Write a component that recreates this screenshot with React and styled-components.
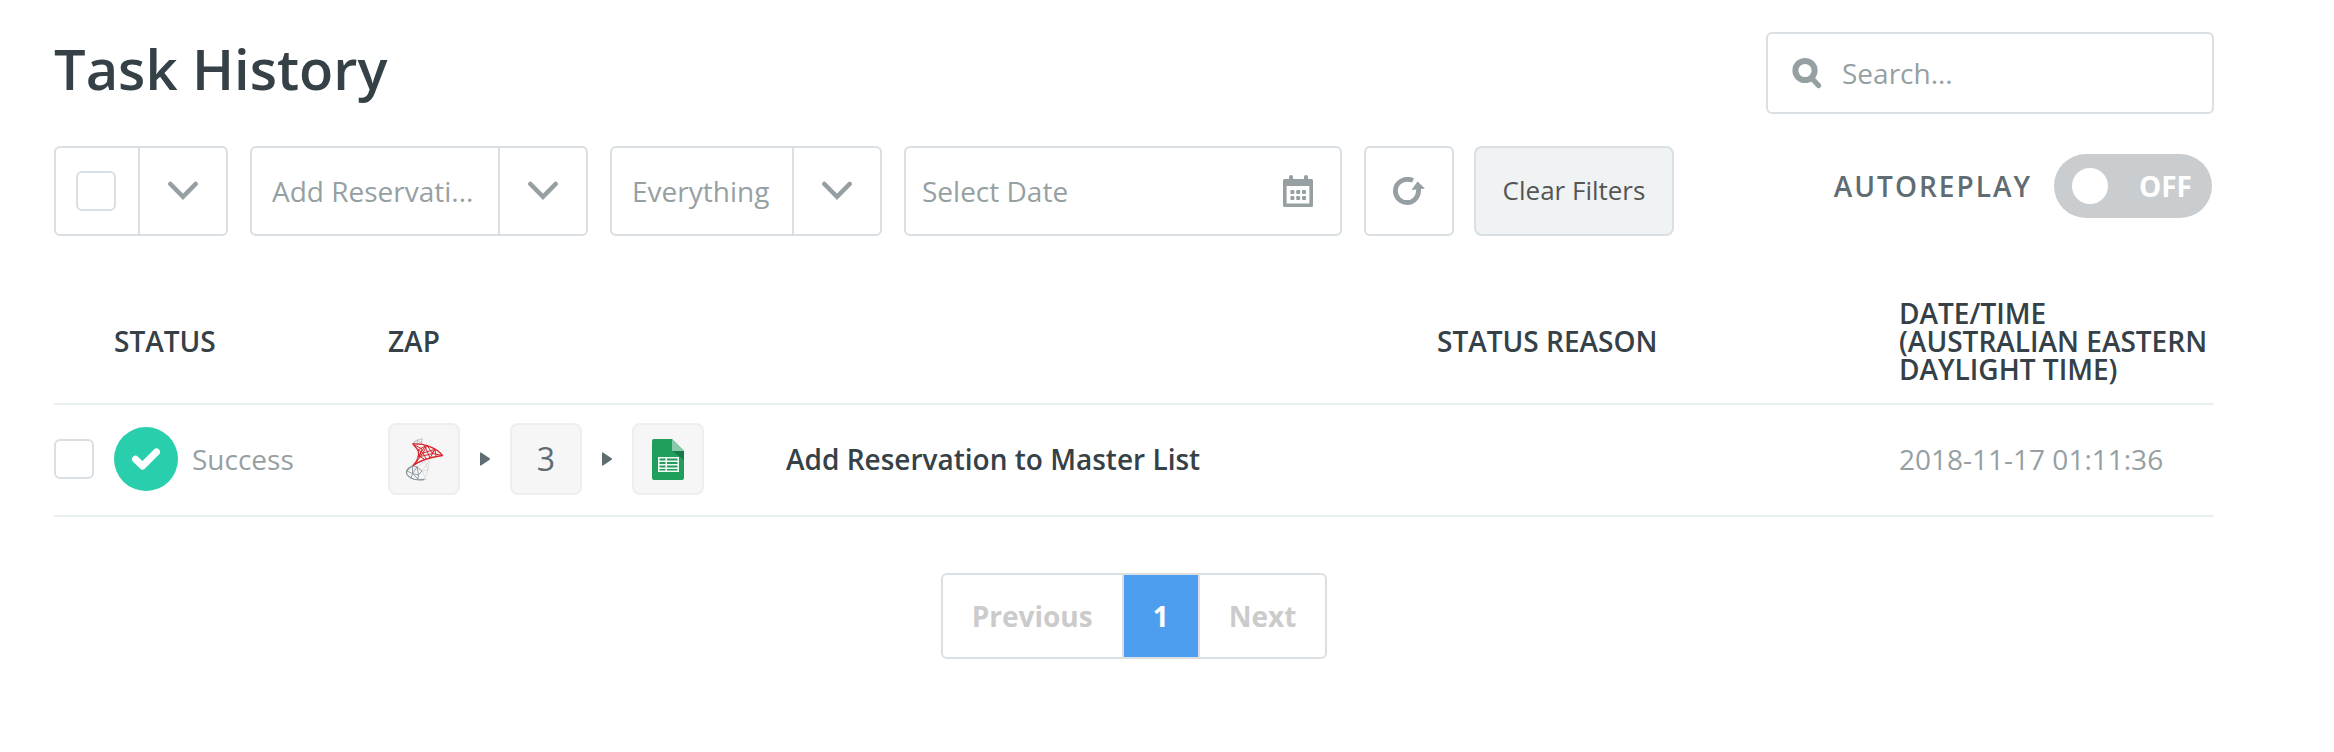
import React from "react";
import styled, { createGlobalStyle, css } from "styled-components";

const color = {
  ink: "#354147",
  slate: "#5f6c72",
  muted: "#969fa2",
  border: "#d9dfe2",
  rule: "#e9eeee",
  blue: "#4e9ef0",
  green: "#29cfad",
};

const GlobalStyle = createGlobalStyle`
  *, *::before, *::after { box-sizing: border-box; }
  body {
    margin: 0;
    background: #fff;
    color: ${color.ink};
    font: 400 28px/40px "Open Sans", "Noto Sans", sans-serif;
  }
  button, input, select { font: inherit; color: inherit; }
`;

const Page = styled.main`
  padding: 32px 120px 92px 54px;
`;

const TopBar = styled.header`
  display: flex;
  justify-content: space-between;
  align-items: flex-start;
`;

const Title = styled.h1`
  margin: 0;
  font-size: 56px;
  line-height: 72px;
  font-weight: 600;
`;

const frame = css`
  border: 2px solid ${color.border};
  border-radius: 6px;
  background: #fff;
`;

const SearchBox = styled.label`
  ${frame}
  display: flex;
  align-items: center;
  gap: 20px;
  width: 448px;
  height: 82px;
  padding: 0 24px;
`;

const TextInput = styled.input`
  flex: 1;
  min-width: 0;
  padding: 0;
  border: 0;
  outline: 0;
  background: none;
  color: ${color.muted};
  &::placeholder { color: ${color.muted}; opacity: 1; }
`;

const Toolbar = styled.div`
  display: flex;
  justify-content: space-between;
  align-items: flex-start;
  margin-top: 32px;
`;

const Filters = styled.div`
  display: flex;
  gap: 22px;
`;

const Actions = styled.div`
  display: flex;
  gap: 20px;
`;

const SplitBox = styled.div`
  ${frame}
  display: grid;
  grid-template-columns: 1fr 88px;
  grid-template-rows: 86px;
  width: ${(p) => p.$width}px;
`;

const CheckSlot = styled.span`
  display: flex;
  align-items: center;
  padding-left: 20px;
`;

const Checkbox = styled.input.attrs({ type: "checkbox" })`
  appearance: none;
  display: block;
  width: 40px;
  height: 40px;
  margin: 0;
  ${frame}
`;

const arrowCell = css`
  grid-column: 2;
  grid-row: 1;
  display: flex;
  align-items: center;
  justify-content: center;
  border: 0;
  border-left: 2px solid ${color.border};
`;

const ArrowButton = styled.button`
  ${arrowCell}
  padding: 0;
  background: none;
`;

const ArrowCell = styled.span`
  ${arrowCell}
  pointer-events: none;
`;

const Select = styled.select`
  grid-column: 1 / -1;
  grid-row: 1;
  appearance: none;
  padding: 0 88px 0 20px;
  border: 0;
  outline: 0;
  background: none;
  color: ${color.muted};
`;

const DateBox = styled.div`
  ${frame}
  display: flex;
  align-items: center;
  width: 438px;
  height: 90px;
  padding: 0 27px 0 16px;
`;

const IconButton = styled.button`
  display: flex;
  padding: 0;
  border: 0;
  background: none;
`;

const RefreshButton = styled.button`
  ${frame}
  display: flex;
  align-items: center;
  justify-content: center;
  width: 90px;
  height: 90px;
  padding: 0;
`;

const ClearButton = styled.button`
  width: 200px;
  height: 90px;
  padding: 0 0 2px;
  border: 2px solid ${color.border};
  border-radius: 8px;
  background: #eff3f4;
  color: #555;
  font-size: 26px;
`;

const Autoreplay = styled.label`
  display: flex;
  align-items: center;
  gap: 22px;
  padding: 8px 2px 0 0;
  color: ${color.slate};
  font-weight: 600;
  letter-spacing: 2px;
`;

const Toggle = styled.span`
  display: grid;
  width: 158px;
  height: 64px;
`;

const ToggleInput = styled.input.attrs({ type: "checkbox", role: "switch" })`
  grid-area: 1 / 1;
  appearance: none;
  display: flex;
  align-items: center;
  margin: 0;
  padding: 0 18px;
  border-radius: 32px;
  background: #cacdd0;
  &::before {
    content: "";
    width: 36px;
    height: 36px;
    border-radius: 50%;
    background: #fff;
  }
`;

const ToggleText = styled.span`
  grid-area: 1 / 1;
  align-self: center;
  justify-self: end;
  padding-right: 20px;
  color: #fff;
  font-weight: 700;
  letter-spacing: 0;
  pointer-events: none;
`;

const Table = styled.table`
  width: 100%;
  margin-top: 43px;
  border-collapse: collapse;
  table-layout: fixed;
`;

const Th = styled.th`
  width: ${(p) => (p.$width ? `${p.$width}px` : "auto")};
  padding: 20px 0;
  border-bottom: 2px solid ${color.rule};
  line-height: 28px;
  font-weight: 600;
  text-align: left;
`;

const Td = styled.td`
  height: 112px;
  padding: 0 0 2px;
  border-bottom: 2px solid ${color.rule};
  color: ${color.muted};
`;

const NameLink = styled.a`
  color: ${color.ink};
  font-weight: 600;
  text-decoration: none;
`;

const Status = styled.div`
  display: flex;
  align-items: center;
  gap: 14px;
`;

const Steps = styled.div`
  display: flex;
  align-items: center;
  gap: 20px;
`;

const Tile = styled.span`
  display: flex;
  align-items: center;
  justify-content: center;
  width: 72px;
  height: 72px;
  border: 2px solid #eee;
  border-radius: 8px;
  background: #f6f6f6;
  color: ${color.slate};
  font-size: 32px;
`;

const Pagination = styled.nav`
  display: flex;
  width: max-content;
  margin: 56px auto 0;
  ${frame}
  overflow: hidden;
`;

const PageButton = styled.button`
  height: 82px;
  padding: 0 29px;
  border: 0;
  background: ${(p) => (p.$current ? color.blue : "#fff")};
  color: ${(p) => (p.$current ? "#fff" : "#cbcbcb")};
  font-weight: 700;
  & + & { border-left: 2px solid ${color.border}; }
`;

const SearchIcon = () => (
  <svg width="30" height="32" viewBox="0 0 30 32" fill="none" stroke={color.muted} aria-hidden="true">
    <circle cx="13" cy="13.5" r="9.6" strokeWidth="6" />
    <path d="M20 21.5l6.5 7" strokeWidth="5.4" strokeLinecap="round" />
  </svg>
);

const Chevron = () => (
  <svg width="30" height="20" viewBox="0 0 30 20" fill="none" stroke={color.muted} strokeWidth="4.6" strokeLinecap="round" aria-hidden="true">
    <path d="M2.4 3L15 15.8 27.6 3" />
  </svg>
);

const CalendarIcon = () => (
  <svg width="30" height="32" viewBox="0 0 30 32" fill={color.muted} aria-hidden="true">
    <rect x="6" y="0" width="4" height="8" rx="2" />
    <rect x="21" y="0" width="4" height="8" rx="2" />
    <path fillRule="evenodd" d="M1.500 4h27A1.500 1.500 0 0 1 30 5.500v25a1.500 1.500 0 0 1-1.500 1.500h-27A1.500 1.500 0 0 1 0 30.500v-25A1.500 1.500 0 0 1 1.500 4zM3.600 11v17.500h22.800V11z" />
    {[7.4, 13.2, 19].map((x) => (
      <React.Fragment key={x}>
        <rect x={x} y="15" width="4" height="4" rx="1" />
        <rect x={x} y="21" width="4" height="4" rx="1" />
      </React.Fragment>
    ))}
  </svg>
);

const RefreshIcon = () => (
  <svg width="32" height="28" viewBox="0 0 32 28" aria-hidden="true">
    <path d="M20 3.400C12 0 2.400 5 2.400 13.800c0 6.500 5 11.700 11.600 11.700S25.600 20.500 25.600 13V10" fill="none" stroke={color.muted} strokeWidth="4.800" />
    <path d="M24.500 4.500L32 11.500 18.500 13z" fill={color.muted} />
  </svg>
);

const CheckBadge = () => (
  <svg width="64" height="64" viewBox="0 0 64 64" aria-hidden="true">
    <circle cx="32" cy="32" r="32" fill={color.green} />
    <path d="M21.500 32.200l7 6.800 14-14" fill="none" stroke="#fff" strokeWidth="7" strokeLinecap="round" strokeLinejoin="round" />
  </svg>
);

const StepArrow = () => (
  <svg width="10" height="14" viewBox="0 0 10 14" fill={color.slate} aria-hidden="true">
    <path d="M0 1.200Q0 0 1 .4L9.600 6.300Q10.300 7 9.600 7.700L1 13.600Q0 14 0 12.800z" />
  </svg>
);

const SqlServerLogo = () => (
  <svg width="40" height="44" viewBox="0 0 40 44" fill="none" strokeLinecap="round" strokeLinejoin="round" role="img" aria-label="SQL Server">
    <g stroke="#b4b8ba" strokeWidth="0.8">
      <path d="M9 6.500C10 4 13 2.500 18 2M9 6.500L14 3.200 13 7.500M14 3.200L17.500 7 18 2M13 7.500L18 4.500" />
    </g>
    <path d="M13 30L21 24.500 24 33 21 42.500M25 24L18 34 24 33M18 34L22 42.500M24 33L25.500 24" stroke="#d3d6d7" strokeWidth="0.700" />
    <g stroke="#d9262c" strokeWidth="1">
      <path d="M9 7C19 6.500 32 10 38.500 18.500C28 20 16 23 8.500 29C13.500 24 16 19 14 13Z" strokeWidth="1.300" />
      <path d="M14 13L23 8.200 19 16 31 12.300 26 21 21 9.500 14 20 29 16.500 38 18.500M9 7L18 12 15 19 19 16 22 21.500M12 25.500L19 16 14 13M31 12.300L32 19M23 8.200L28 16 31 12.300M15 19L20 22" />
    </g>
    <g stroke="#899297" strokeWidth="0.900">
      <path d="M8.500 29C3.500 31 1.500 34 3 37.500C6 42 13 43.500 20 42.500" strokeWidth="1.300" />
      <path d="M8.500 29L13 30 8.500 36.500 3 34 8.500 29 8.500 36.500 14 42M13 30L14.500 38 8.500 36.500 7 41M13 30L18 34 14.500 38 14 42" />
    </g>
  </svg>
);

const SheetsLogo = () => (
  <svg width="32" height="41" viewBox="0 0 32 41" role="img" aria-label="Google Sheets">
    <path d="M2 0h18l12 12v27a2 2 0 0 1-2 2H2a2 2 0 0 1-2-2V2a2 2 0 0 1 2-2z" fill="#209e5c" />
    <path d="M20 0l12 12H20z" fill="#87cbaa" />
    <path d="M20.500 12H32v9z" fill="#187a46" />
    <path fillRule="evenodd" fill="#f3faf6" d="M6 18h21v15H6zM7.500 19.500v2h6v-2zM15 19.500v2h10.500v-2zM7.500 23v2h6v-2zM15 23v2h10.500v-2zM7.500 26.500v2h6v-2zM15 26.500v2h10.500v-2zM7.500 30v1.500h6V30zM15 30v1.500h10.500V30z" />
  </svg>
);

export default function App() {
  return (
    <>
      <GlobalStyle />
      <Page>
        <TopBar>
          <Title>Task History</Title>
          <SearchBox>
            <SearchIcon />
            <TextInput type="search" placeholder="Search..." aria-label="Search" />
          </SearchBox>
        </TopBar>

        <Toolbar>
          <Filters>
            <SplitBox $width={174}>
              <CheckSlot>
                <Checkbox aria-label="Select all tasks" />
              </CheckSlot>
              <ArrowButton type="button" aria-label="Selection options">
                <Chevron />
              </ArrowButton>
            </SplitBox>
            <SplitBox $width={338}>
              <Select aria-label="Zap">
                <option>Add Reservati...</option>
              </Select>
              <ArrowCell><Chevron /></ArrowCell>
            </SplitBox>
            <SplitBox $width={272}>
              <Select aria-label="Status filter">
                <option>Everything</option>
              </Select>
              <ArrowCell><Chevron /></ArrowCell>
            </SplitBox>
            <DateBox>
              <TextInput type="text" placeholder="Select Date" aria-label="Date" />
              <IconButton type="button" aria-label="Open calendar">
                <CalendarIcon />
              </IconButton>
            </DateBox>
            <Actions>
              <RefreshButton type="button" aria-label="Refresh">
                <RefreshIcon />
              </RefreshButton>
              <ClearButton type="button">Clear Filters</ClearButton>
            </Actions>
          </Filters>
          <Autoreplay>
            AUTOREPLAY
            <Toggle>
              <ToggleInput />
              <ToggleText>OFF</ToggleText>
            </Toggle>
          </Autoreplay>
        </Toolbar>

        <Table>
          <thead>
            <tr>
              <Th $width={60} aria-label="Select" />
              <Th $width={274}>STATUS</Th>
              <Th $width={398}>ZAP</Th>
              <Th aria-label="Name" />
              <Th $width={462}>STATUS REASON</Th>
              <Th $width={315}>DATE/TIME (AUSTRALIAN EASTERN DAYLIGHT TIME)</Th>
            </tr>
          </thead>
          <tbody>
            <tr>
              <Td><Checkbox aria-label="Select Add Reservation to Master List" /></Td>
              <Td>
                <Status>
                  <CheckBadge />
                  Success
                </Status>
              </Td>
              <Td>
                <Steps>
                  <Tile><SqlServerLogo /></Tile>
                  <StepArrow />
                  <Tile>3</Tile>
                  <StepArrow />
                  <Tile><SheetsLogo /></Tile>
                </Steps>
              </Td>
              <Td><NameLink href="#task">Add Reservation to Master List</NameLink></Td>
              <Td />
              <Td>2018-11-17 01:11:36</Td>
            </tr>
          </tbody>
        </Table>

        <Pagination aria-label="Pages">
          <PageButton type="button">Previous</PageButton>
          <PageButton type="button" $current aria-current="page">1</PageButton>
          <PageButton type="button">Next</PageButton>
        </Pagination>
      </Page>
    </>
  );
}
